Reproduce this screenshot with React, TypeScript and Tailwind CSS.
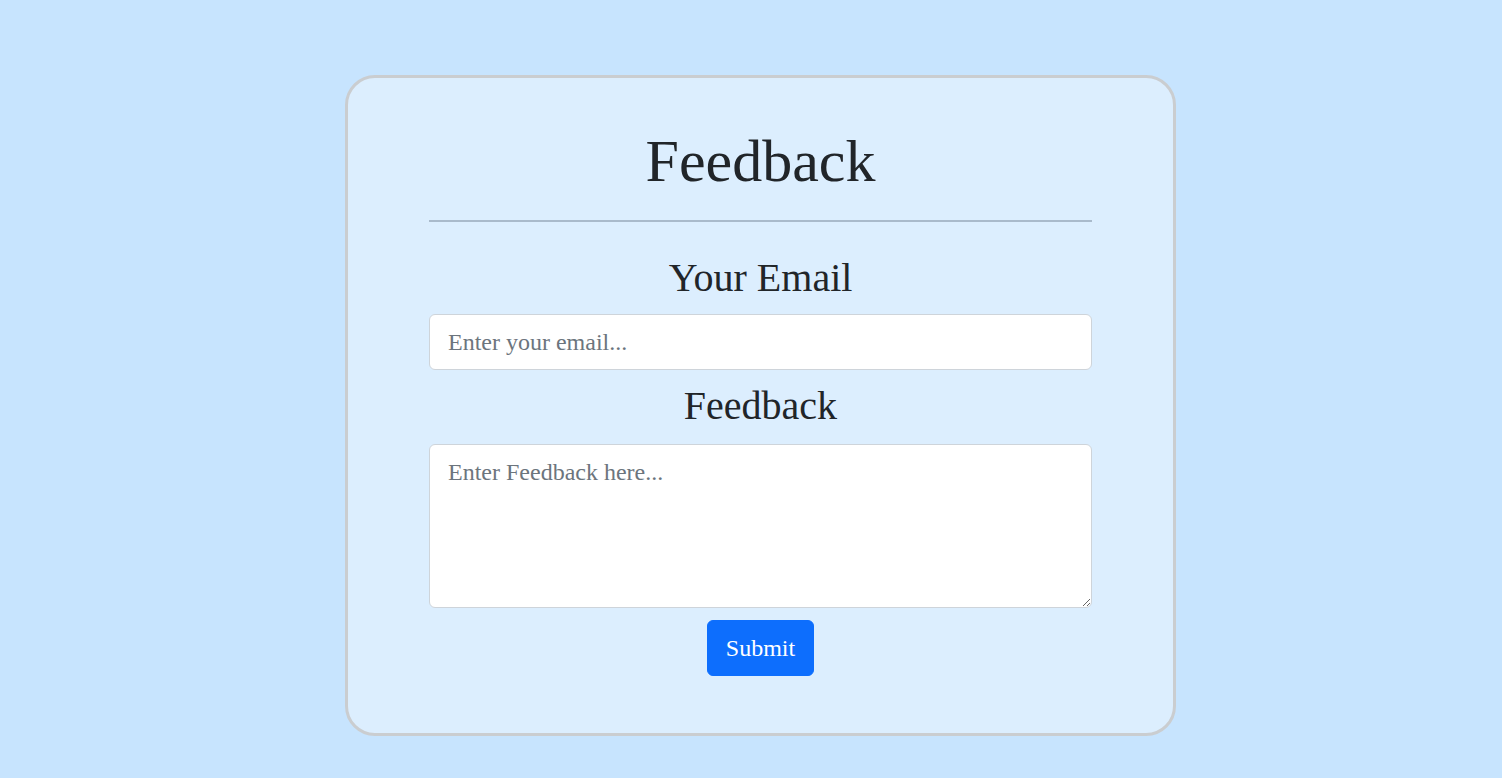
export default function App() {
  return (
    <div
      className="h-[778px] w-full bg-[#c7e4fe] pl-[19px] pt-[75px]"
      style={{ fontFamily: '"Liberation Serif", "Times New Roman", serif' }}
    >
      <div className="mx-auto flex w-[831px] flex-col rounded-[30px] border-[3px] border-[#cacdd0] bg-[#dceefe] px-[81px] pb-[57px] pt-[47px] text-[#212529]">
        <h1 className="text-center text-[60px] leading-[72px]">Feedback</h1>
        <hr className="mt-[23px] h-[2px] border-0 bg-[#a9bacb]" />
        <form className="flex flex-col" onSubmit={(e) => e.preventDefault()}>
          <label htmlFor="email" className="mt-[32px] text-center text-[40px] leading-[48px]">
            Your Email
          </label>
          <input
            id="email"
            type="email"
            placeholder="Enter your email..."
            className="mt-[12px] h-[56px] w-full rounded-[6px] border border-[#ced4da] bg-white px-[18px] py-[9px] text-[24px] leading-[36px] text-[#212529] outline-none placeholder:text-[#6c757d]"
          />
          <label htmlFor="feedback" className="mt-[12px] text-center text-[40px] leading-[48px]">
            Feedback
          </label>
          <textarea
            id="feedback"
            placeholder="Enter Feedback here..."
            className="mt-[14px] h-[164px] w-full resize rounded-[6px] border border-[#ced4da] bg-white px-[18px] py-[9px] text-[24px] leading-[36px] text-[#212529] outline-none placeholder:text-[#6c757d]"
          />
          <div className="mt-[12px] flex justify-center">
            <button
              type="submit"
              className="h-[56px] rounded-[6px] border border-[#0d6efd] bg-[#0d6efd] px-[18px] text-[24px] leading-[36px] text-white"
            >
              Submit
            </button>
          </div>
        </form>
      </div>
    </div>
  )
}
